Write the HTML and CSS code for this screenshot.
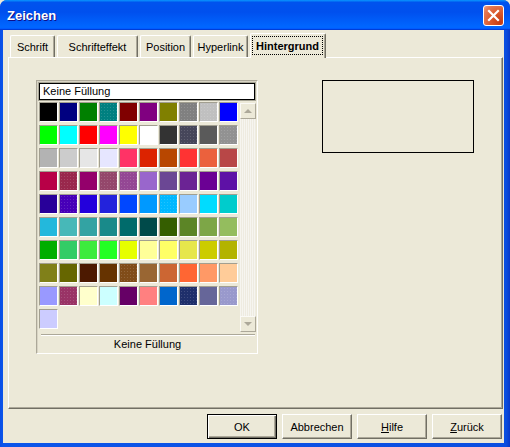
FILE: index.html
```html
<!DOCTYPE html>
<html>
<head>
<meta charset="utf-8">
<link rel="stylesheet" href="styles.css">
</head>
<body>
<div class="window">
  <div class="titlebar">
    <span class="title">Zeichen</span>
    <div class="close">
      <svg width="13" height="13" viewBox="0 0 13 13"><path d="M2 2 L11 11 M11 2 L2 11" stroke="#fff" stroke-width="2.2" stroke-linecap="square"/></svg>
    </div>
  </div>
  <div class="client">
    <div class="tabs">
      <div class="tab w1">Schrift</div>
      <div class="tab w2">Schrifteffekt</div>
      <div class="tab w3">Position</div>
      <div class="tab w4">Hyperlink</div>
      <div class="tab active"><span class="focus">Hintergrund</span></div>
    </div>
    <div class="panel">
      <div class="listbox">
        <div class="namefield">Keine Füllung</div>
        <div class="gridwrap">
          <div class="grid">
            <span class="sw" style="background:#000000"></span>
            <span class="sw" style="background:#000080"></span>
            <span class="sw" style="background:#008000"></span>
            <span class="sw dith" style="background-color:#008080"></span>
            <span class="sw" style="background:#800000"></span>
            <span class="sw" style="background:#800080"></span>
            <span class="sw" style="background:#808000"></span>
            <span class="sw dith" style="background-color:#808080"></span>
            <span class="sw dith" style="background-color:#c0c0c0"></span>
            <span class="sw" style="background:#0000ff"></span>

            <span class="sw" style="background:#00ff00"></span>
            <span class="sw" style="background:#00ffff"></span>
            <span class="sw" style="background:#ff0000"></span>
            <span class="sw" style="background:#ff00ff"></span>
            <span class="sw" style="background:#ffff00"></span>
            <span class="sw" style="background:#ffffff"></span>
            <span class="sw" style="background:#333333"></span>
            <span class="sw dith" style="background-color:#46465a"></span>
            <span class="sw" style="background:#5a5a5a"></span>
            <span class="sw dith" style="background-color:#929292"></span>

            <span class="sw" style="background:#b3b3b3"></span>
            <span class="sw" style="background:#cccccc"></span>
            <span class="sw" style="background:#e6e6e6"></span>
            <span class="sw" style="background:#e6e6ff"></span>
            <span class="sw" style="background:#ff3366"></span>
            <span class="sw" style="background:#dc2300"></span>
            <span class="sw" style="background:#b84700"></span>
            <span class="sw" style="background:#ff3333"></span>
            <span class="sw" style="background:#eb613d"></span>
            <span class="sw" style="background:#b84747"></span>

            <span class="sw" style="background:#b80047"></span>
            <span class="sw dith" style="background-color:#99284c"></span>
            <span class="sw" style="background:#94006b"></span>
            <span class="sw dith" style="background-color:#94476b"></span>
            <span class="sw dith" style="background-color:#944794"></span>
            <span class="sw" style="background:#9966cc"></span>
            <span class="sw" style="background:#6b4794"></span>
            <span class="sw" style="background:#6b2394"></span>
            <span class="sw" style="background:#6b0094"></span>
            <span class="sw" style="background:#5e11a6"></span>

            <span class="sw" style="background:#280099"></span>
            <span class="sw dith" style="background-color:#4700b8"></span>
            <span class="sw" style="background:#2300dc"></span>
            <span class="sw" style="background:#2323dc"></span>
            <span class="sw" style="background:#0047ff"></span>
            <span class="sw" style="background:#0099ff"></span>
            <span class="sw dith" style="background-color:#00b8ff"></span>
            <span class="sw" style="background:#99ccff"></span>
            <span class="sw" style="background:#00dcff"></span>
            <span class="sw" style="background:#00cccc"></span>

            <span class="sw" style="background:#23b8dc"></span>
            <span class="sw" style="background:#47b8b8"></span>
            <span class="sw" style="background:#33a3a3"></span>
            <span class="sw" style="background:#198a8a"></span>
            <span class="sw" style="background:#006b6b"></span>
            <span class="sw" style="background:#004a4a"></span>
            <span class="sw" style="background:#355e00"></span>
            <span class="sw" style="background:#5c8526"></span>
            <span class="sw" style="background:#7da647"></span>
            <span class="sw" style="background:#94bd5e"></span>

            <span class="sw" style="background:#00ae00"></span>
            <span class="sw" style="background:#33cc66"></span>
            <span class="sw" style="background:#3deb3d"></span>
            <span class="sw" style="background:#23ff23"></span>
            <span class="sw" style="background:#e6ff00"></span>
            <span class="sw" style="background:#ffff99"></span>
            <span class="sw" style="background:#ffff66"></span>
            <span class="sw" style="background:#e6e64c"></span>
            <span class="sw" style="background:#cccc00"></span>
            <span class="sw" style="background:#b3b300"></span>

            <span class="sw" style="background:#808019"></span>
            <span class="sw" style="background:#666600"></span>
            <span class="sw" style="background:#4c1900"></span>
            <span class="sw" style="background:#663300"></span>
            <span class="sw dith" style="background-color:#804c19"></span>
            <span class="sw" style="background:#996633"></span>
            <span class="sw" style="background:#cc6633"></span>
            <span class="sw" style="background:#ff6633"></span>
            <span class="sw" style="background:#ff9966"></span>
            <span class="sw" style="background:#ffcc99"></span>

            <span class="sw" style="background:#9999ff"></span>
            <span class="sw dith" style="background-color:#993366"></span>
            <span class="sw" style="background:#ffffcc"></span>
            <span class="sw" style="background:#ccffff"></span>
            <span class="sw" style="background:#660066"></span>
            <span class="sw" style="background:#ff8080"></span>
            <span class="sw" style="background:#0066cc"></span>
            <span class="sw dith" style="background-color:#1f2f6b"></span>
            <span class="sw" style="background:#666699"></span>
            <span class="sw dith" style="background-color:#9999cc"></span>

            <span class="sw" style="background:#ccccff"></span>
          </div>
          <div class="scrollbar">
            <div class="sbtn"><span class="tri up"></span></div>
            <div class="track"></div>
            <div class="sbtn"><span class="tri down"></span></div>
          </div>
        </div>
        <div class="sep"></div>
        <div class="label">Keine Füllung</div>
      </div>
      <div class="preview"></div>
    </div>
    <div class="buttons">
      <div class="btn default">OK</div>
      <div class="btn">Abbrechen</div>
      <div class="btn"><span><u>H</u>ilfe</span></div>
      <div class="btn"><span><u>Z</u>urück</span></div>
    </div>
  </div>
</div>
</body>
</html>
```

FILE: styles.css
```css
html, body {
  margin: 0;
  padding: 0;
  background: #ece9d8;
}
body {
  font-family: "Liberation Sans", Arial, sans-serif;
  font-size: 11px;
  color: #000;
}
.window {
  width: 510px;
  height: 447px;
  display: flex;
  flex-direction: column;
  background: linear-gradient(90deg, #0a4fe6 0, #0b55ea 3px, #0a4ee0 506px, #0838c8 510px);
  border-radius: 7px 7px 0 0;
  overflow: hidden;
  box-sizing: border-box;
}
.titlebar {
  height: 30px;
  flex: none;
  display: flex;
  align-items: center;
  justify-content: space-between;
  padding: 0 6px 0 7px;
  box-sizing: border-box;
  background: linear-gradient(180deg, #0997ff, #0053ee 8%, #0050ee 40%, #0066ff 88%, #0066ff 93%, #005bff 95%, #003dd7 96%, #003dd7);
}
.title {
  color: #fff;
  font-family: "Liberation Sans", Arial, sans-serif;
  font-weight: bold;
  font-size: 13px;
  text-shadow: 1px 1px #0f1089;
  margin-top: 1px;
}
.close {
  width: 21px;
  height: 21px;
  box-sizing: border-box;
  border: 1px solid #fff;
  border-radius: 3px;
  background: radial-gradient(circle at 85% 85%, #c53b12 0, #db5a2c 45%, #e47a55 80%, #f0a488 100%);
  display: flex;
  align-items: center;
  justify-content: center;
  margin-top: 1px;
}
.client {
  flex: 1;
  margin: 0 6px 4px 3px;
  background: #ece9d8;
  padding: 3px 1px 0 5px;
  display: flex;
  flex-direction: column;
}
.tabs {
  display: flex;
  align-items: flex-end;
  gap: 2px;
  height: 24px;
  padding-left: 2px;
  flex: none;
}
.tab {
  height: 22px;
  box-sizing: border-box;
  border-top: 1px solid #fff;
  border-left: 1px solid #fff;
  border-right: 1px solid #716f64;
  box-shadow: inset -1px 0 #aca899;
  border-radius: 2px 2px 0 0;
  display: flex;
  align-items: center;
  justify-content: center;
  background: #ece9d8;
  padding-top: 1px;
}
.w1 { width: 45px; }
.w2 { width: 81px; }
.w3 { width: 51px; }
.w4 { width: 55px; }
.tab.active {
  width: 76px;
  height: 25px;
  margin-bottom: -1px;
  font-weight: bold;
  position: relative;
  z-index: 1;
  align-items: flex-start;
  padding-top: 2px;
}
.focus {
  width: 71px;
  height: 19px;
  box-sizing: border-box;
  border: 1px dotted #000;
  display: flex;
  align-items: center;
  justify-content: center;
  margin-left: -1px;
}
.panel {
  height: 352px;
  box-sizing: border-box;
  border-top: 1px solid #fff;
  border-left: 1px solid #fff;
  border-right: 1px solid #716f64;
  border-bottom: 1px solid #716f64;
  box-shadow: inset -1px -1px #aca899;
  padding: 22px 0 0 27px;
  display: flex;
  align-items: flex-start;
  flex: none;
}
.listbox {
  width: 222px;
  height: 274px;
  box-sizing: border-box;
  border: 1px solid;
  border-color: #aca899 #fff #fff #aca899;
  box-shadow: inset 1px 1px #d8d4c4;
  padding: 2px 1px 1px 2px;
  display: flex;
  flex-direction: column;
}
.namefield {
  height: 17px;
  box-sizing: border-box;
  border: 1px solid #000;
  box-shadow: 0 0 0 1px #a7a595;
  background: #fff;
  padding-left: 3px;
  line-height: 15px;
  margin-right: 1px;
  flex: none;
}
.gridwrap {
  margin-top: 2px;
  height: 230px;
  display: flex;
  justify-content: space-between;
  flex: none;
}
.grid {
  display: grid;
  grid-template-columns: repeat(10, 19px);
  grid-auto-rows: 20px;
  column-gap: 1px;
  row-gap: 3px;
  align-content: start;
}
.sw {
  display: block;
  box-sizing: border-box;
  border: 1px solid;
  border-color: #a29f90 #fff #fff #a29f90;
}
.dith {
  background-image: radial-gradient(circle, rgba(255,255,255,0.14) 0.6px, transparent 0.9px);
  background-size: 3px 3px;
}
.scrollbar {
  width: 16px;
  display: flex;
  flex-direction: column;
  padding-top: 1px;
  box-sizing: border-box;
}
.sbtn {
  height: 16px;
  flex: none;
  box-sizing: border-box;
  border: 1px solid;
  border-color: #fbfaf6 #aca899 #aca899 #fbfaf6;
  background: #ece9d8;
  display: flex;
  align-items: center;
  justify-content: center;
}
.tri {
  width: 0;
  height: 0;
  border-left: 4px solid transparent;
  border-right: 4px solid transparent;
}
.tri.up { border-bottom: 4px solid #aca899; }
.tri.down { border-top: 4px solid #aca899; }
.track {
  flex: 1;
  background: repeating-linear-gradient(90deg, #f6f5f0 0 1px, #eeebe0 1px 2px);
}
.sep {
  margin: 2px 1px 0 2px;
  height: 2px;
  box-sizing: border-box;
  border-top: 1px solid #aca899;
  border-bottom: 1px solid #fff;
  flex: none;
}
.label {
  height: 16px;
  line-height: 17px;
  text-align: center;
}
.preview {
  margin-left: 64px;
  width: 152px;
  height: 73px;
  box-sizing: border-box;
  border: 1px solid #000;
}
.buttons {
  display: flex;
  justify-content: flex-end;
  gap: 5px;
  margin-top: 5px;
  padding-right: 1px;
  flex: none;
}
.btn {
  width: 70px;
  height: 25px;
  box-sizing: border-box;
  border: 1px solid;
  border-color: #fff #716f64 #716f64 #fff;
  box-shadow: inset -1px -1px #aca899;
  background: #ece9d8;
  display: flex;
  align-items: center;
  justify-content: center;
}
.btn.default {
  border: 1px solid #000;
  box-shadow: inset 1px 1px #fff, inset -1px -1px #716f64, inset -2px -2px #aca899;
}
```
